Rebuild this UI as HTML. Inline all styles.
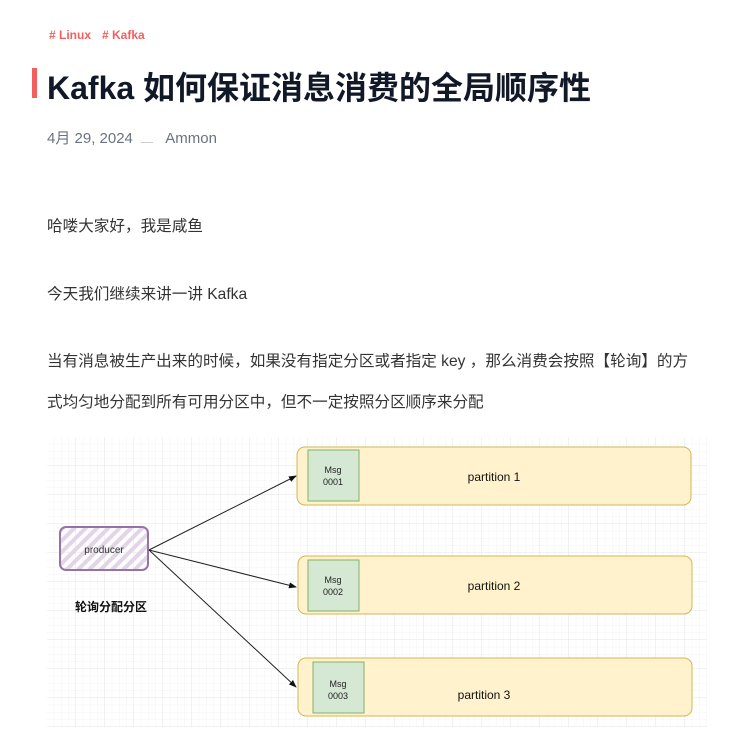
<!DOCTYPE html>
<html><head><meta charset="utf-8"><style>
body{margin:0;background:#fff;width:751px;height:744px;overflow:hidden;font-family:"Liberation Sans","Noto Sans CJK SC",sans-serif;position:relative}
.a{position:absolute;white-space:nowrap}
.tag{color:#f25f5c;font-size:12px;font-weight:bold;top:28px}
.p{font-size:15.6px;color:#333;left:47px}
</style></head><body>
<div class="a tag" style="left:49px"># Linux</div>
<div class="a tag" style="left:102px"># Kafka</div>
<div class="a" style="left:32px;top:68px;width:5px;height:30px;background:#f25f5c"></div>
<div class="a" style="left:47px;top:63px;font-size:32px;font-weight:bold;color:#111827">Kafka 如何保证消息消费的全局顺序性</div>
<div class="a" style="left:47px;top:127px;font-size:15px;color:#6b7280">4月 29, 2024 <span style="display:inline-block;width:12px;border-bottom:1px solid #ccc;margin:0 8px 0 4px"></span> Ammon</div>
<div class="a p" style="top:214px">哈喽大家好，我是咸鱼</div>
<div class="a p" style="top:282px">今天我们继续来讲一讲 Kafka</div>
<div class="a p" style="top:349px">当有消息被生产出来的时候，如果没有指定分区或者指定 key ，那么消费会按照【轮询】的方</div>
<div class="a p" style="top:390px">式均匀地分配到所有可用分区中，但不一定按照分区顺序来分配</div>
<svg class="a" style="left:0;top:0" width="751" height="744">
<defs>
<pattern id="g" x="47" y="437" width="7.25" height="7.25" patternUnits="userSpaceOnUse"><path d="M7.25 0V7.25H0" fill="none" stroke="#f3f3f3" stroke-width="1"/></pattern>
<pattern id="G" x="47" y="437" width="29" height="29" patternUnits="userSpaceOnUse"><path d="M29 0V29H0" fill="none" stroke="#e4e4e4" stroke-width="1"/></pattern>
<pattern id="h" width="8" height="8" patternUnits="userSpaceOnUse" patternTransform="rotate(45)"><rect width="4" height="8" fill="#e1d5e7"/></pattern>
<marker id="m" markerWidth="8" markerHeight="8" refX="7" refY="4" orient="auto"><path d="M0 1L8 4L0 7z" fill="#111"/></marker>
</defs>
<rect x="47" y="437" width="660" height="290" fill="url(#g)"/>
<rect x="47" y="437" width="660" height="290" fill="url(#G)"/>
<rect x="60" y="527" width="88" height="43" rx="6" fill="url(#h)" stroke="#9673a6" stroke-width="2"/>
<text x="104" y="553" font-size="10" text-anchor="middle" fill="#333" font-family="Liberation Sans">producer</text>
<text x="111" y="611" font-size="12" font-weight="bold" text-anchor="middle" fill="#111" font-family="Noto Sans CJK SC">轮询分配分区</text>
<g stroke="#222" stroke-width="1" marker-end="url(#m)">
<line x1="149" y1="550" x2="296" y2="476"/>
<line x1="149" y1="550" x2="296" y2="587"/>
<line x1="149" y1="550" x2="296" y2="687"/>
</g>
<g stroke="#d6b656" fill="#fff2cc" stroke-width="1">
<rect x="297" y="447" width="394" height="58" rx="8"/>
<rect x="298" y="556" width="394" height="58" rx="8"/>
<rect x="298" y="658" width="394" height="58" rx="8"/>
</g>
<g stroke="#82b366" fill="#d5e8d4">
<rect x="308" y="450" width="51" height="51"/>
<rect x="308" y="560" width="51" height="51"/>
<rect x="313" y="662" width="51" height="51"/>
</g>
<g font-size="9" text-anchor="middle" fill="#222" font-family="Liberation Sans">
<text x="333" y="473">Msg</text><text x="333" y="485">0001</text>
<text x="333" y="583">Msg</text><text x="333" y="595">0002</text>
<text x="338" y="687">Msg</text><text x="338" y="699">0003</text>
</g>
<g font-size="12" text-anchor="middle" fill="#111" font-family="Liberation Sans">
<text x="494" y="481">partition 1</text>
<text x="494" y="590">partition 2</text>
<text x="484" y="699">partition 3</text>
</g>
</svg>
</body></html>
